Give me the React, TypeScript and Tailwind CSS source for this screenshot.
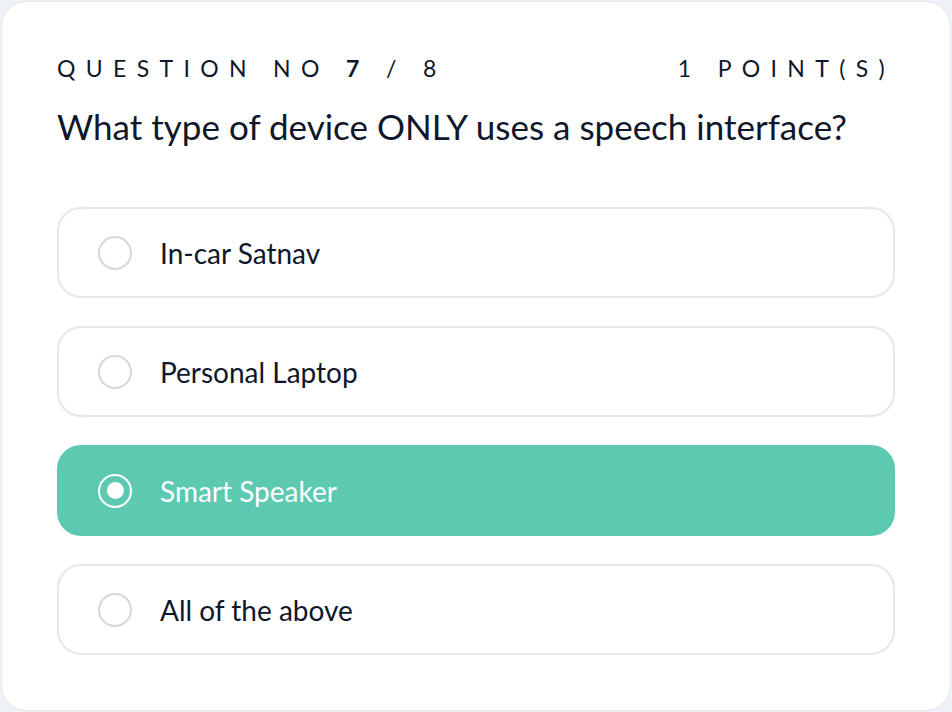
import React, { useState } from "react";

const options = ["In-car Satnav", "Personal Laptop", "Smart Speaker", "All of the above"];

const Radio = ({ checked }: { checked: boolean }) =>
  checked ? (
    <span className="flex h-[34px] w-[34px] shrink-0 items-center justify-center rounded-full border-2 border-white">
      <span className="h-[17px] w-[17px] rounded-full bg-white" />
    </span>
  ) : (
    <span className="h-[34px] w-[34px] shrink-0 rounded-full border-2 border-[#d4d8de] bg-white" />
  );

export default function App() {
  const [selected, setSelected] = useState(2);

  return (
    <div className="min-h-screen bg-[#eef1f5] p-px" style={{ fontFamily: "Lato, 'Noto Sans', sans-serif" }}>
      <div className="h-[710px] rounded-[26px] border border-[#e6e8ec] bg-white px-[55px] pt-[52px] text-[#0f172a]">
        <div className="flex items-center justify-between text-[23px] leading-[28px] tracking-[0.45em]">
          <span>
            QUESTION NO <b className="font-bold">7</b> / 8
          </span>
          <span>1 POINT(S)</span>
        </div>
        <h1 className="mt-[23px] text-[35px] leading-[42px]">What type of device ONLY uses a speech interface?</h1>

        <div className="mt-[60px] flex flex-col gap-[28px]">
          {options.map((opt, i) => {
            const active = i === selected;
            return (
              <button
                key={opt}
                onClick={() => setSelected(i)}
                className={
                  active
                    ? "flex h-[91px] w-full items-center gap-[28px] rounded-[24px] border-2 border-[#5dc9b1] bg-[#5dc9b1] pl-[39px] text-left text-[28px] text-white"
                    : "flex h-[91px] w-full items-center gap-[28px] rounded-[24px] border-2 border-[#e5e7eb] bg-white pl-[39px] text-left text-[28px] text-[#0f172a]"
                }
              >
                <Radio checked={active} />
                <span>{opt}</span>
              </button>
            );
          })}
        </div>
      </div>
    </div>
  );
}
